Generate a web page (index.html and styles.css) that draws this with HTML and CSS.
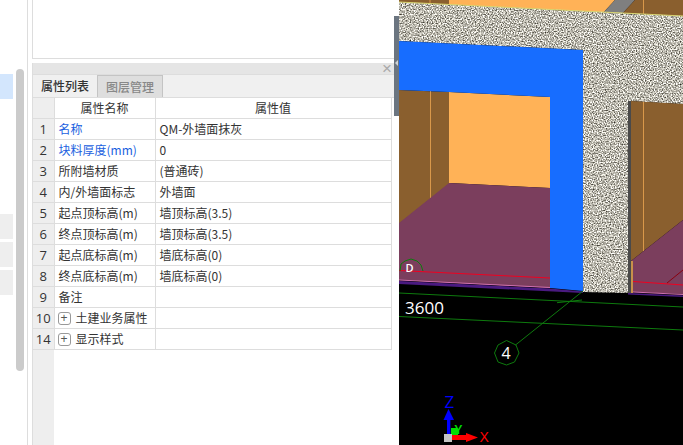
FILE: index.html
```html
<!DOCTYPE html>
<html lang="zh-CN">
<head>
<meta charset="utf-8">
<title>属性列表</title>
<link rel="stylesheet" href="styles.css">
</head>
<body>
<div class="app">
  <aside class="rail">
    <div class="rail-list">
      <div class="rail-item rail-item-active"></div>
      <div class="rail-group">
        <div class="rail-item rail-item-muted"></div>
        <div class="rail-item rail-item-muted"></div>
        <div class="rail-item rail-item-muted"></div>
      </div>
    </div>
    <div class="rail-scroll"></div>
  </aside>
  <main class="panel">
    <div class="top-box"></div>
    <section class="props">
      <header class="props-title"><span class="close">×</span></header>
      <nav class="tabs">
        <div class="tab tab-active">属性列表</div>
        <div class="tab">图层管理</div>
      </nav>
      <div class="grid-wrap">
        <table class="grid">
          <colgroup><col class="col-n"><col class="col-k"><col class="col-v"></colgroup>
          <thead><tr><th class="num"></th><th>属性名称</th><th>属性值</th></tr></thead>
          <tbody>
            <tr><td class="num">1</td><td class="blue">名称</td><td>QM-外墙面抹灰</td></tr>
            <tr><td class="num">2</td><td class="blue">块料厚度(mm)</td><td>0</td></tr>
            <tr><td class="num">3</td><td>所附墙材质</td><td>(普通砖)</td></tr>
            <tr><td class="num">4</td><td>内/外墙面标志</td><td>外墙面</td></tr>
            <tr><td class="num">5</td><td>起点顶标高(m)</td><td>墙顶标高(3.5)</td></tr>
            <tr><td class="num">6</td><td>终点顶标高(m)</td><td>墙顶标高(3.5)</td></tr>
            <tr><td class="num">7</td><td>起点底标高(m)</td><td>墙底标高(0)</td></tr>
            <tr><td class="num">8</td><td>终点底标高(m)</td><td>墙底标高(0)</td></tr>
            <tr><td class="num">9</td><td>备注</td><td></td></tr>
            <tr><td class="num">10</td><td><div class="group-row"><span class="plus">+</span>土建业务属性</div></td><td></td></tr>
            <tr><td class="num">14</td><td><div class="group-row"><span class="plus">+</span>显示样式</div></td><td></td></tr>
          </tbody>
        </table>
      </div>
    </section>
  </main>
  <div class="splitter"><div class="splitter-handle"><span class="splitter-arrow"></span></div></div>
  <svg class="scene" viewBox="399 0 284 445" width="284" height="445" aria-label="三维视图">
    <defs>
      <filter id="speckle" x="0" y="0" width="100%" height="100%" color-interpolation-filters="sRGB">
        <feTurbulence type="fractalNoise" baseFrequency="0.77" numOctaves="1" seed="7"/>
        <feColorMatrix type="matrix" values="1.75 0 0 0 -0.14  1.75 0 0 0 -0.15  1.75 0 0 0 -0.19  0 0 0 0 1"/>
      </filter>
      <clipPath id="plaster">
        <polygon points="399,2 683,16 683,104 628,101 628,293 583,292 583,50 399,41"/>
      </clipPath>
    </defs>
    <rect class="f-black" x="399" y="0" width="284" height="445"/>
    <polygon class="f-brown" points="399,0 449,0 449,5 399,4"/>
    <polygon class="f-orange" points="449,0 615,0 603,13 449,5"/>
    <polygon class="f-gray" points="615,0 635,0 622,14 603,13"/>
    <polygon class="f-brown" points="635,0 683,0 683,17 622,14"/>
    <line class="s-tan" x1="430" y1="0" x2="430" y2="3"/>
    <line class="s-tan" x1="643.5" y1="0" x2="643.5" y2="15"/>
    <g clip-path="url(#plaster)"><rect class="speckle" x="399" y="0" width="284" height="300" filter="url(#speckle)"/></g>
    <polyline class="s-yellow" points="399,2 683,16"/>
    <polygon class="f-brown" points="399,90 449,92 449,184 399,224"/>
    <line class="s-tan" x1="430.5" y1="91" x2="430.5" y2="198"/>
    <polygon class="f-orange" points="449,92 550,97 550,188 449,183"/>
    <polygon class="f-plum" points="399,223 449,183 550,188 550,288 399,280"/>
    <polygon class="f-blue" points="399,41 583,50 583,291 550,288 550,97 449,92 399,90"/>
    <polygon class="f-dark" points="628,101 631,101 631,293 628,293"/>
    <polygon class="f-brown" points="631,101 683,104 683,220 631,261"/>
    <line class="s-tan" x1="643.5" y1="102" x2="643.5" y2="251"/>
    <polygon class="f-plum" points="631,261 683,220 683,294 631,292"/>
    <rect class="f-tan" x="631" y="261" width="2" height="32"/>
    <polyline class="s-red" points="399,270.5 550,278"/>
    <polyline class="s-red" points="633,281.5 683,285"/>
    <line class="s-darkred" x1="667" y1="283" x2="683" y2="270"/>
    <polyline class="s-pink" points="399,280 550,287.5"/>
    <polyline class="s-pink" points="633,292 683,294.5"/>
    <polygon class="f-violet" points="399,281 550,288.5 583,291.5 583,293 399,284"/>
    <polygon class="f-violet" points="628,293 683,295.5 683,297 628,294.5"/>
    <polyline class="s-green" points="400,271 401,264 405,261 411,259 417,261 421,265 423,271"/>
    <text class="t-d" x="405.5" y="272">D</text>
    <polyline class="s-green" points="399,293 683,307"/>
    <polyline class="s-green" points="399,316.5 683,330"/>
    <line class="s-green" x1="583" y1="291" x2="515.5" y2="345"/>
    <line class="s-green" x1="557" y1="302.7" x2="582" y2="300"/>
    <polygon class="s-green f-none" points="506.5,340.5 516,345 519,353 514.5,362 506.5,365 498,362 494.5,353 498,345"/>
    <text class="t-dim" x="405" y="314">3600</text>
    <text class="t-axisnum" x="501.5" y="358.5">4</text>
    <rect class="f-blue-a" x="447" y="419" width="3.4" height="16"/>
    <polygon class="f-blue-a" points="448.5,409 454,420 443.5,420"/>
    <text class="t-z" x="444.5" y="408">Z</text>
    <rect class="f-green" x="451" y="428" width="7" height="7"/>
    <text class="t-y" x="454.5" y="434">Y</text>
    <rect class="f-red" x="452" y="435" width="15" height="5"/>
    <polygon class="f-red" points="466,433 478,437.5 466,442"/>
    <rect class="f-cube" x="444" y="434" width="8" height="8"/>
    <text class="t-x" x="479.5" y="442">X</text>
  </svg>
</div>
</body>
</html>
```

FILE: styles.css
```css
* { box-sizing: border-box; }
html, body { margin: 0; height: 100%; overflow: hidden; background: #fff; }
body { font-family: "Noto Sans CJK SC", "Noto Sans", sans-serif; font-size: 12px; color: #333; }

.app { display: flex; width: 683px; height: 445px; overflow: hidden; }

/* left rail */
.rail { flex: 0 0 28px; height: 445px; display: flex; border-right: 1px solid #ddd; }
.rail-list { flex: 0 0 13px; padding-top: 74px; margin-right: 3px; }
.rail-item { height: 25px; }
.rail-item-active { background: #d3e6fd; }
.rail-item-muted { background: #eeeeee; }
.rail-group { display: flex; flex-direction: column; gap: 3px; margin-top: 115px; }
.rail-scroll { flex: 0 0 8px; height: 302px; margin-top: 69px; background: #cbcbcb; border-radius: 4px; }

/* middle panel */
.panel { flex: 0 0 366px; height: 445px; display: flex; flex-direction: column; padding-left: 4px; }
.top-box { flex: 0 0 59px; border: 1px solid #ddd; border-top: 0; border-right: 0; }
.props { flex: 1; display: flex; flex-direction: column; margin-top: 4px; border-left: 1px solid #ddd; min-height: 0; }
.props-title { flex: 0 0 12px; background: #e5e5e5; border-bottom: 1px solid #ddd; display: flex; justify-content: flex-end; align-items: center; padding-right: 2px; }
.close { color: #aaa; font-family: "Liberation Sans", sans-serif; font-size: 17px; line-height: 11px; width: 10px; text-align: center; }
.tabs { flex: 0 0 22px; display: flex; background: #f0f0f0; border-bottom: 1px solid #ddd; }
.tab { width: 66px; height: 22px; line-height: 21px; text-align: center; background: #dedede; color: #888; font-weight: 500; border: 1px solid #c4c4c4; border-bottom: 0; }
.tab-active { width: 64px; background: #f0f0f0; color: #333; border: 0; }

.grid-wrap { flex: 1; min-height: 0; background: linear-gradient(to right, #eee 21px, #fff 21px); }
.grid { border-collapse: collapse; table-layout: fixed; width: 358px; background: transparent; }
.col-n { width: 21px; }
.col-k { width: 101px; }
.col-v { width: 236px; }
.grid th, .grid td { height: 21px; padding: 0 0 0 4px; border: 1px solid #ddd; border-top: 0; font-weight: 400; line-height: 20px; white-space: nowrap; overflow: hidden; text-align: left; background: #fff; }
.grid th { height: 20px; text-align: center; padding: 0; }
.grid th:first-child, .grid td:first-child { border-left: 0; }
.grid .num { background: #eee; text-align: center; padding: 0; font-family: "Open Sans", sans-serif; font-size: 13px; }
.grid .blue { color: #1a5fe0; }
.group-row { display: flex; align-items: center; gap: 5px; height: 20px; margin-left: -1px; }
.plus { flex: 0 0 13px; height: 13px; border: 1px solid #999; border-radius: 3px; line-height: 10px; text-align: center; font-family: "Liberation Sans", sans-serif; font-size: 12px; color: #555; background: #fff; }

/* splitter */
.splitter { flex: 0 0 5px; height: 445px; padding-top: 16px; }
.splitter-handle { width: 5px; height: 100px; background: #6b7580; padding-top: 44px; }
.splitter-arrow { display: block; width: 0; height: 0; border: 3.5px solid transparent; border-left: 0; border-right: 3px solid #cfd3d6; margin-left: 1px; }

/* 3D scene */
.scene { flex: 0 0 284px; display: block; }
.f-black { fill: #000; }
.f-brown { fill: #8a5f2e; }
.f-orange { fill: #ffb257; }
.f-gray { fill: #7f7f7f; }
.f-plum { fill: #7b3e5d; }
.f-blue { fill: #176dff; }
.f-dark { fill: #4a4a4a; }
.f-tan { fill: #c8904a; }
.f-violet { fill: #4a1a80; }
.f-none { fill: none; }
.f-blue-a { fill: #0000ff; }
.f-green { fill: #00e000; }
.f-red { fill: #ff0000; }
.f-cube { fill: #c4c4c4; }
.s-tan { stroke: #d9984a; stroke-width: 1; fill: none; }
.s-yellow { stroke: #d8d470; stroke-width: 1; fill: none; }
.s-red { stroke: #f00020; stroke-width: 1; fill: none; }
.s-darkred { stroke: #8a0010; stroke-width: 1; }
.s-pink { stroke: #d070b0; stroke-width: 1; fill: none; }
.s-green { stroke: #0e7a0e; stroke-width: 1; fill: none; }
.t-dim { font-family: "Open Sans", sans-serif; font-size: 17px; fill: #fff; }
.t-axisnum { font-family: "Open Sans", sans-serif; font-size: 16px; fill: #fff; }
.t-d { font-family: "Open Sans", sans-serif; font-size: 11px; font-weight: 600; fill: #fff; }
.t-z { font-family: "Open Sans", sans-serif; font-size: 17px; fill: #0000ff; }
.t-y { font-family: "Open Sans", sans-serif; font-size: 13px; font-weight: 600; fill: #00e000; }
.t-x { font-family: "Liberation Sans", sans-serif; font-size: 14px; fill: #ff0000; }
```
